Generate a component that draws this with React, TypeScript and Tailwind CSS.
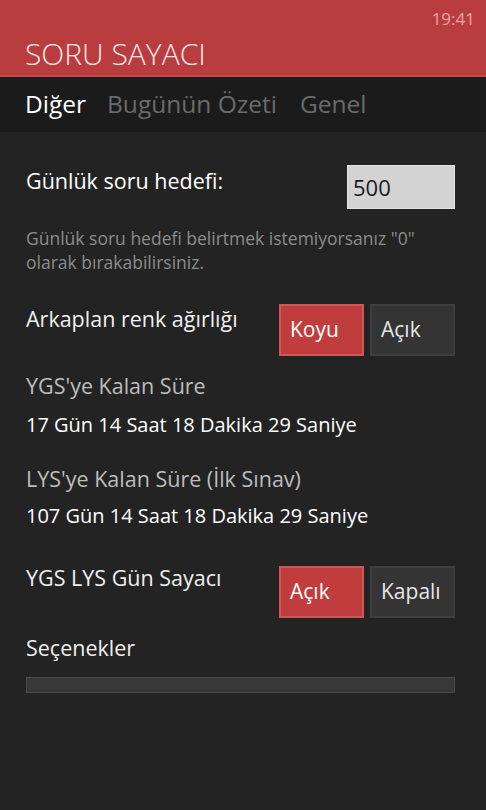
import React from "react";

const font = { fontFamily: '"Open Sans", "Noto Sans", sans-serif' };

const ToggleButton = ({ label, active }: { label: string; active?: boolean }) => (
    <div
        className={
            active
                ? "flex h-[52px] w-[85px] items-center border-2 border-[#cf5757] bg-[#c13d3d] pl-[9px] text-[21px] text-white"
                : "flex h-[52px] w-[85px] items-center border-2 border-[#3f3f3f] bg-[#343434] pl-[9px] text-[21px] text-[#e6e6e6]"
        }
    >
        {label}
    </div>
);

export default function App() {
    return (
        <div className="flex h-[810px] w-[486px] flex-col bg-[#232323]" style={font}>
            {/* Header */}
            <div className="relative h-[77px] border-b-2 border-[#c54848] bg-[#b93c3e] pl-[25px]">
                <span className="absolute right-[11px] top-[6px] text-[17px] text-[#eaa5a5]">19:41</span>
                <div className="pt-[36px] text-[30px] font-light leading-[36px] text-[#fbe9e9]">SORU SAYACI</div>
            </div>

            {/* Tabs */}
            <div className="flex h-[55px] items-center bg-[#1b1b1b] pl-[25px] text-[24.5px]">
                <span className="text-white">Diğer</span>
                <span className="ml-[21px] text-[#6a6a6a]">Bugünün Özeti</span>
                <span className="ml-[23px] text-[#6a6a6a]">Genel</span>
            </div>

            {/* Content */}
            <div className="flex-1 pl-[26px] pr-[31px] pt-[33px]">
                <div className="flex items-start justify-between">
                    <div className="pt-[1px] text-[21.5px] leading-[30px] text-white">Günlük soru hedefi:</div>
                    <div className="flex h-[44px] w-[108px] items-center border border-[#e2e2e2] bg-[#d3d3d3] pl-[5px] text-[22px] text-[#1a1a1a]">
                        500
                    </div>
                </div>

                <p className="mt-[17px] text-[17.5px] leading-[24px] text-[#8c8c8c]">
                    Günlük soru hedefi belirtmek istemiyorsanız "0" olarak bırakabilirsiniz.
                </p>

                <div className="mt-[30px] flex items-start justify-between">
                    <div className="text-[21.5px] leading-[30px] text-[#f0f0f0]">Arkaplan renk ağırlığı</div>
                    <div className="flex gap-[6px]">
                        <ToggleButton label="Koyu" active />
                        <ToggleButton label="Açık" />
                    </div>
                </div>

                <div className="mt-[15px] text-[21.5px] leading-[30px] text-[#bdbdbd]">YGS'ye Kalan Süre</div>
                <div className="mt-[9px] text-[20px] leading-[30px] text-white">17 Gün 14 Saat 18 Dakika 29 Saniye</div>

                <div className="mt-[24px] text-[21.5px] leading-[30px] text-[#bdbdbd]">LYS'ye Kalan Süre (İlk Sınav)</div>
                <div className="mt-[7px] text-[20px] leading-[30px] text-white">107 Gün 14 Saat 18 Dakika 29 Saniye</div>

                <div className="mt-[35px] flex items-start justify-between">
                    <div className="-mt-[3px] text-[21.5px] leading-[30px] text-[#f0f0f0]">YGS LYS Gün Sayacı</div>
                    <div className="flex gap-[6px]">
                        <ToggleButton label="Açık" active />
                        <ToggleButton label="Kapalı" />
                    </div>
                </div>

                <div className="mt-[15px] text-[21.5px] leading-[30px] text-[#f0f0f0]">Seçenekler</div>

                <div className="mt-[14px] h-[16px] border border-[#4a4a4a] bg-[#383838]" />
            </div>
        </div>
    );
}
